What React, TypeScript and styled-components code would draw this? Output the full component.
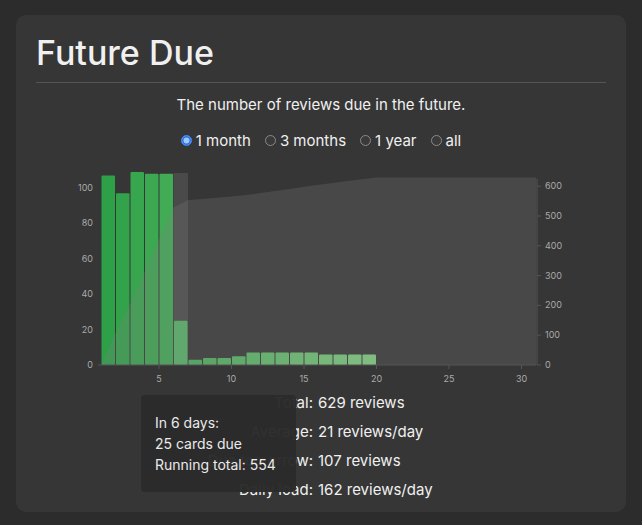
import React from "react";
import styled, { createGlobalStyle } from "styled-components";

const Global = createGlobalStyle`
  html, body { margin: 0; padding: 0; background: #2c2c2c; }
  body { font-family: Inter, "Noto Sans", sans-serif; color: #f0f0f0; }
`;

const Page = styled.div`
  padding: 15px 16px 13px 16px;
  height: 525px;
  box-sizing: border-box;
`;

const Card = styled.div`
  position: relative;
  background: #363636;
  border-radius: 10px;
  height: 497px;
  padding: 0 20px;
  box-sizing: border-box;
  display: flex;
  flex-direction: column;
`;

const Title = styled.h1`
  margin: 0;
  padding-top: 14px;
  font-size: 34px;
  font-weight: 500;
  line-height: 48px;
  border-bottom: 1px solid #555;
  padding-bottom: 5px;
`;

const Subtitle = styled.div`
  text-align: center;
  font-size: 15px;
  margin-top: 12px;
`;

const Radios = styled.div`
  display: flex;
  justify-content: center;
  gap: 14px;
  margin-top: 17px;
  font-size: 15px;
`;

const RadioLabel = styled.label`
  display: flex;
  align-items: center;
  gap: 4px;
`;

const Dot = styled.span<{ $on?: boolean }>`
  width: 11px;
  height: 11px;
  border-radius: 50%;
  box-sizing: border-box;
  border: 1px solid ${(p) => (p.$on ? "#3b82f6" : "#8a8a8a")};
  background: ${(p) => (p.$on ? "#9cc7ff" : "#3a3a3a")};
  box-shadow: ${(p) => (p.$on ? "inset 0 0 0 1.5px #2f6fd6" : "none")};
`;

const ChartSvg = styled.svg`
  display: block;
  margin: 14px -20px 0 -20px;
`;

const Stats = styled.div`
  display: grid;
  grid-template-columns: 277px auto;
  column-gap: 5px;
  row-gap: 10px;
  font-size: 15px;
  margin-top: 3px;
`;

const Label = styled.div`
  text-align: right;
`;

const Tooltip = styled.div`
  position: absolute;
  left: 125px;
  top: 380px;
  width: 155px;
  height: 97px;
  box-sizing: border-box;
  padding: 17px 14px;
  background: #2b2b2b;
  border-radius: 4px;
  font-size: 14px;
  line-height: 21px;
  white-space: nowrap;
  opacity: 0.97;
`;

const bars = [107, 97, 109, 108, 108, 25, 3, 4, 4, 5, 7, 7, 7, 7, 7, 6, 6, 6, 6];
const W = 14.5;
const X0 = 101;
const Y0 = 364;
const ly = (v: number) => Y0 - v * 1.77;
const ry = (v: number) => Y0 - v * 0.298;

function lerp(a: number[], b: number[], t: number) {
  return a.map((v, i) => Math.round(v + (b[i] - v) * t));
}

export default function App() {
  let cum = 0;
  const pts: string[] = [`${X0},${Y0}`];
  bars.forEach((b, i) => {
    cum += b;
    pts.push(`${X0 + (i + 1) * W},${ry(cum).toFixed(1)}`);
  });
  pts.push(`${X0 + 30 * W},${ry(cum).toFixed(1)}`);
  pts.push(`${X0 + 30 * W},${Y0}`);

  return (
    <>
      <Global />
      <Page>
        <Card>
          <Title>Future Due</Title>
          <Subtitle>The number of reviews due in the future.</Subtitle>
          <Radios>
            <RadioLabel><Dot $on />1 month</RadioLabel>
            <RadioLabel><Dot />3 months</RadioLabel>
            <RadioLabel><Dot />1 year</RadioLabel>
            <RadioLabel><Dot />all</RadioLabel>
          </Radios>
          <ChartSvg width={610} height={226} viewBox="16 163 610 226">
            {bars.map((b, i) => {
              const t = i / (bars.length - 1);
              const c = lerp([46, 160, 72], [130, 210, 130], t);
              return (
                <rect
                  key={i}
                  x={X0 + i * W + 0.5}
                  y={ly(b)}
                  width={W - 1}
                  height={Y0 - ly(b)}
                  rx={1}
                  fill={`rgb(${c[0]},${c[1]},${c[2]})`}
                />
              );
            })}
            <rect x={X0 + 5 * W} y={172} width={W} height={Y0 - 172} fill="rgba(255,255,255,0.1)" />
            <polygon points={pts.join(" ")} fill="rgba(128,128,128,0.25)" />
            <line x1={X0 - 3} y1={Y0} x2={X0 + 30 * W} y2={Y0} stroke="#555" />
            <line x1={537} y1={178} x2={537} y2={Y0} stroke="#555" />
            <g fill="#aaa" fontSize="9" fontFamily="Inter, sans-serif">
              {[0, 20, 40, 60, 80, 100].map((v) => (
                <text key={v} x={93} y={ly(v) + 3} textAnchor="end">{v}</text>
              ))}
              {[0, 100, 200, 300, 400, 500, 600].map((v) => (
                <g key={v}>
                  <line x1={537} x2={541} y1={ry(v)} y2={ry(v)} stroke="#555" />
                  <text x={545} y={ry(v) + 3}>{v}</text>
                </g>
              ))}
              {[5, 10, 15, 20, 25, 30].map((d) => (
                <g key={d}>
                  <line x1={X0 + (d - 1) * W} x2={X0 + (d - 1) * W} y1={Y0} y2={Y0 + 4} stroke="#555" />
                  <text x={X0 + (d - 1) * W} y={Y0 + 17} textAnchor="middle">{d}</text>
                </g>
              ))}
            </g>
          </ChartSvg>
          <Stats>
            <Label>Total:</Label><div>629 reviews</div>
            <Label>Average:</Label><div>21 reviews/day</div>
            <Label>Due tomorrow:</Label><div>107 reviews</div>
            <Label>Daily load:</Label><div>162 reviews/day</div>
          </Stats>
          <Tooltip>
            In 6 days:<br />25 cards due<br />Running total: 554
          </Tooltip>
        </Card>
      </Page>
    </>
  );
}
